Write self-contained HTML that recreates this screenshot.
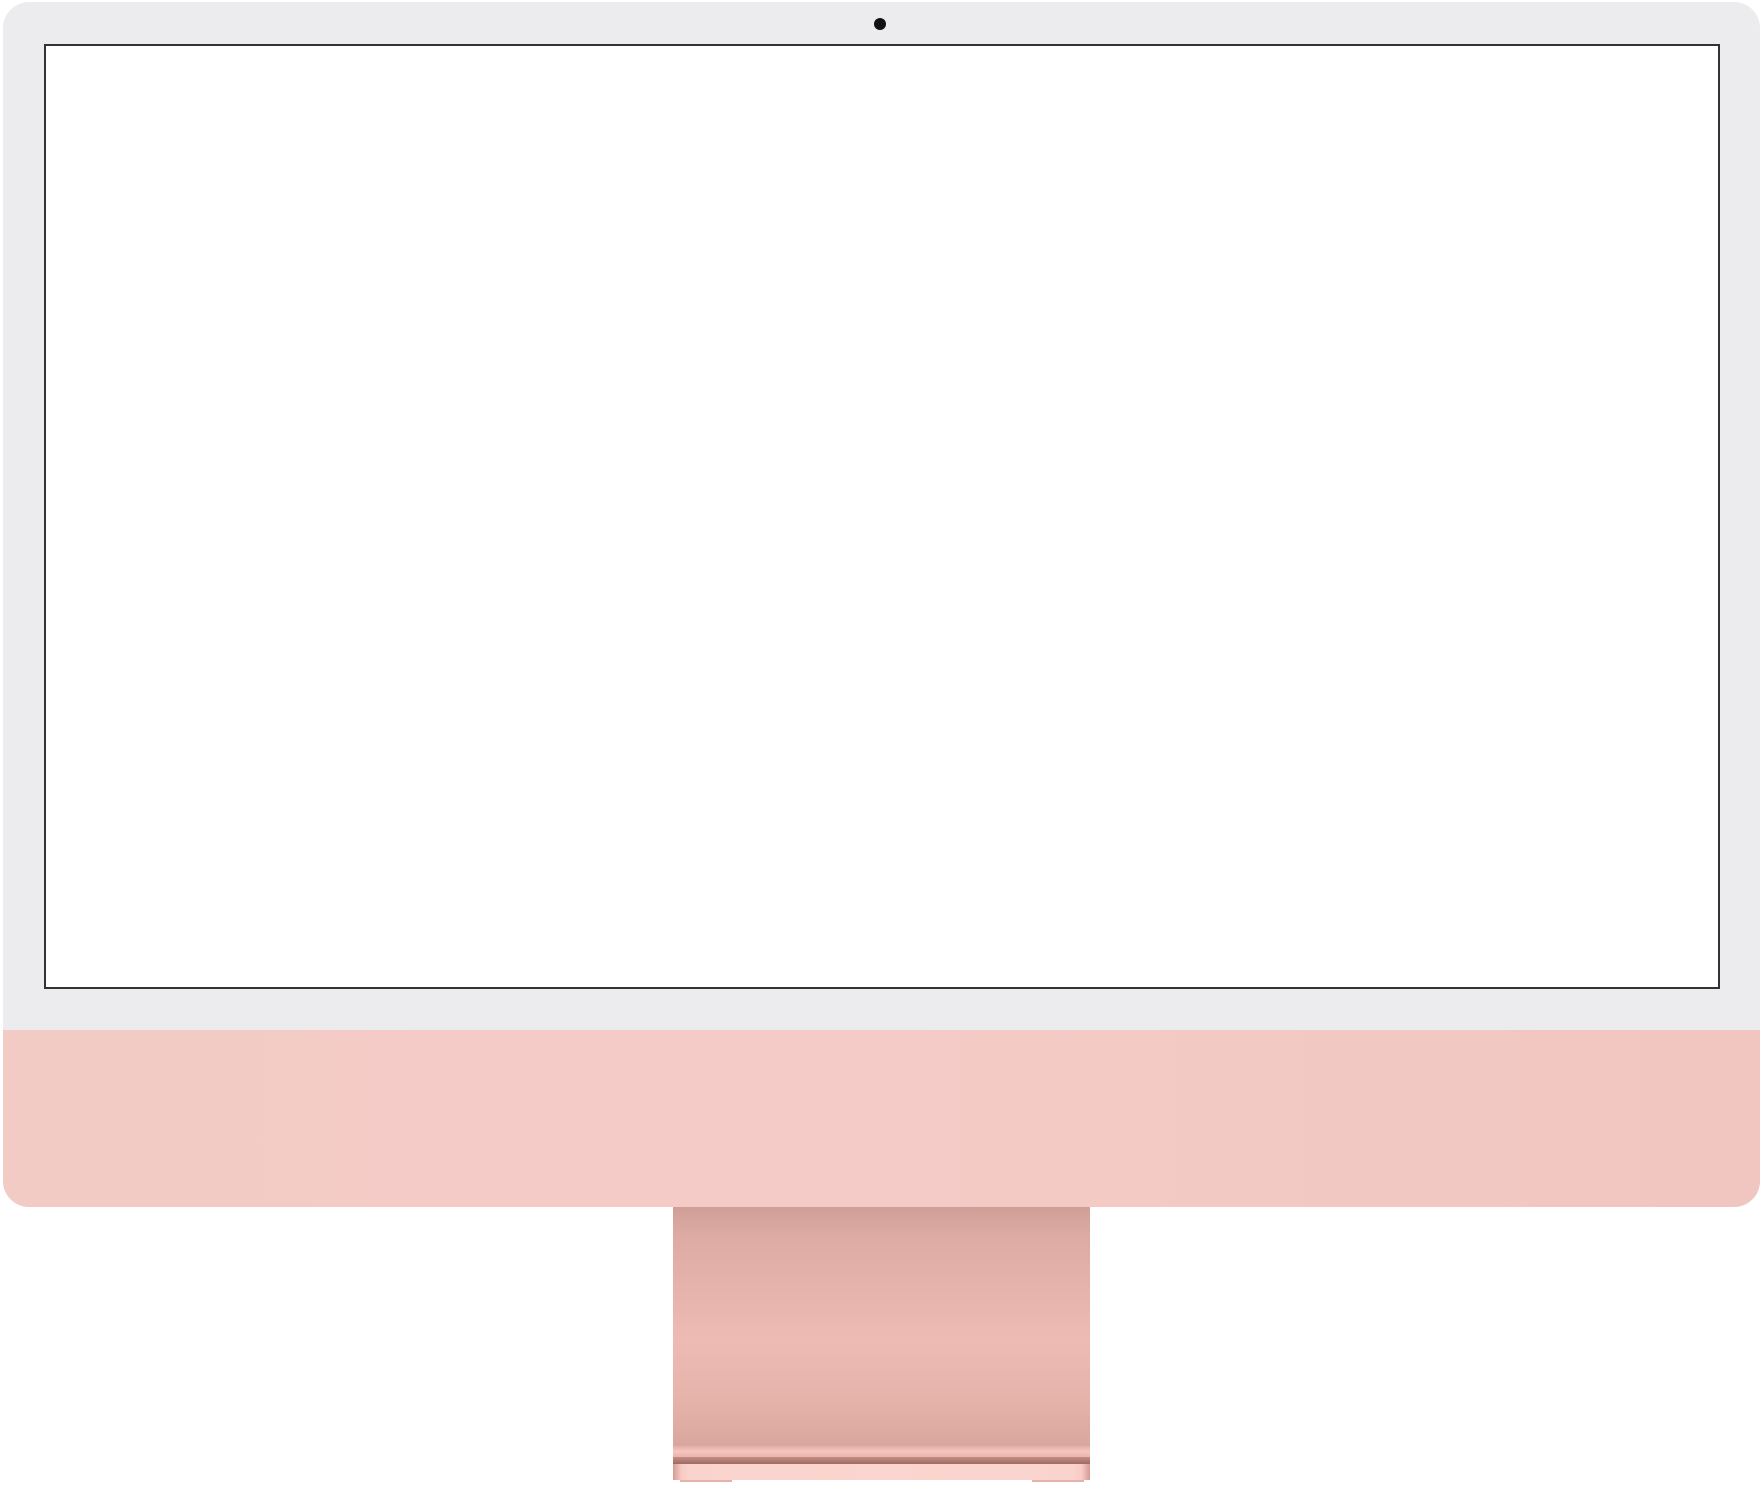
<!DOCTYPE html>
<html><head><style>
html,body{margin:0;padding:0;background:#fff;width:1764px;height:1490px;overflow:hidden;position:relative}
.body{position:absolute;left:3px;top:2px;width:1757px;height:1205px;border-radius:26px;overflow:hidden;background:#ececee}
.chin{position:absolute;left:0;right:0;top:1028px;bottom:0;background:linear-gradient(90deg,#f3cbc5,#f4cbc6 50%,#f1c6c0)}
.screen{position:absolute;left:41px;top:42px;width:1672px;height:941px;border:2px solid #333;background:#fff;box-sizing:content-box}
.cam{position:absolute;left:871px;top:16px;width:12px;height:12px;border-radius:50%;background:#111}
.stand{position:absolute;left:673px;top:1207px;width:417px;height:241px;background:linear-gradient(180deg,#cf9f97 0%,#ddaba3 12%,#edbbb3 55%,#e6b3ab 80%,#d9a69e 100%)}
.hl{position:absolute;left:673px;top:1446px;width:417px;height:11px;background:linear-gradient(180deg,#e3aea6,#f6c6bf 50%,#e8b3ab)}
.ledge{position:absolute;left:673px;top:1457px;width:417px;height:7px;background:linear-gradient(180deg,#c48e86,#9e6a63)}
.foot{position:absolute;left:673px;top:1464px;width:417px;height:16px;background:linear-gradient(90deg,#d49b93 0,#f7cbc5 2%,#fad3cd 4%,#fbd5cf 50%,#fad3cd 96%,#f7cbc5 98%,#d49b93 100%)}
.f1,.f2{position:absolute;top:1480px;width:52px;height:2px;background:#e5b2ab}
.f1{left:680px}.f2{left:1032px}
</style></head><body>
<div class="body"><div class="chin"></div><div class="screen"></div><div class="cam"></div></div>
<div class="stand"></div><div class="hl"></div><div class="ledge"></div><div class="foot"></div><div class="f1"></div><div class="f2"></div>
</body></html>
